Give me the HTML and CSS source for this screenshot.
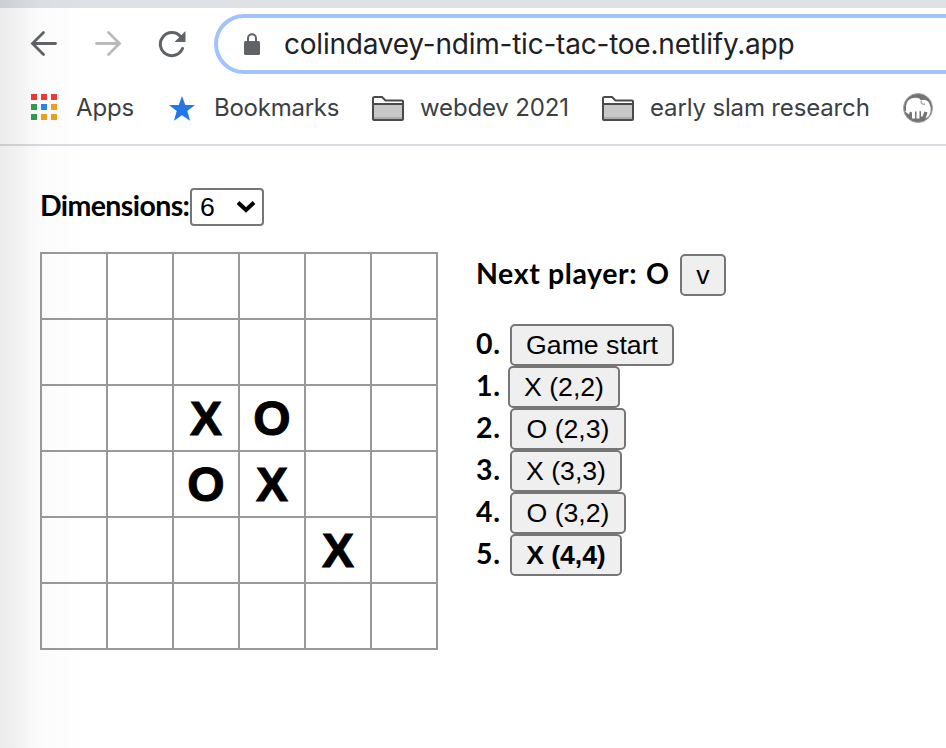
FILE: index.html
```html
<!DOCTYPE html>
<html lang="en">
<head>
<meta charset="utf-8">
<title>N-dim tic-tac-toe</title>
<link rel="stylesheet" href="styles.css">
</head>
<body>
<div class="tabstrip"></div>
<header class="browser">
  <div class="toolbar">
    <svg class="nav" width="28" height="28" viewBox="0 0 28 28"><path d="M25.500 13.500H3M13.500 2.500L2.500 13.500 13.500 24.500" fill="none" stroke="#5f6368" stroke-width="2.800" stroke-linecap="round"/></svg>
    <svg class="nav forward" width="28" height="28" viewBox="0 0 28 28"><path d="M2.500 13.500h22M14.500 2.500L25.500 13.500 14.500 24.500" fill="none" stroke="#bababa" stroke-width="2.800" stroke-linecap="round"/></svg>
    <svg class="nav reload" width="28" height="28" viewBox="0 0 28 28"><path d="M24.500 18.500A11.500 11.500 0 1 1 22.500 6.500" fill="none" stroke="#5f6368" stroke-width="3" stroke-linecap="round"/><path d="M27.500 1v11H16.500z" fill="#5f6368"/></svg>
    <div class="omnibox">
      <svg width="16" height="22" viewBox="0 0 16 22"><path d="M4 9V5.200a4 4 0 0 1 8 0V9" fill="none" stroke="#5f6368" stroke-width="2"/><rect y="8" width="16" height="14" rx="1.500" fill="#5f6368"/></svg>
      <span class="url">colindavey-ndim-tic-tac-toe.netlify.app</span>
    </div>
  </div>
  <nav class="bookmarks">
    <svg class="apps" width="26" height="26" viewBox="0 0 26 26"><path d="M0 0h6v6H0zM10 0h6v6h-6zM20 0h6v6h-6z" fill="#ef3b36"/><path d="M0 10h6v6H0zM0 20h6v6H0z" fill="#359a55"/><path d="M10 10h6v6h-6z" fill="#2a87f0"/><path d="M20 10h6v6h-6zM10 20h6v6h-6zM20 20h6v6h-6z" fill="#eea022"/></svg>
    <span class="label label-apps">Apps</span>
    <svg class="star" width="26" height="25" viewBox="0 0 26 25"><path d="M13 0l3.300 9H26l-7.700 6 2.800 9.800L13 19.300 4.900 24.800 7.700 15 0 9h9.700z" fill="#2477e8"/></svg>
    <span class="label label-bookmarks">Bookmarks</span>
    <svg class="folder" width="32" height="25" viewBox="0 0 32 25"><path d="M1 23V2.500Q1 1 2.500 1H10l3.500 3.500H30Q31 4.500 31 5.500V23Q31 24 30 24H2Q1 24 1 23z" fill="#fff" stroke="#4a4a4a" stroke-width="2"/><path d="M2 8.500h28V23H2z" fill="#c8c8c8"/><path d="M2 21h28v2H2z" fill="#acacac"/><path d="M1 8h30" stroke="#4a4a4a" stroke-width="2"/></svg>
    <span class="label label-webdev">webdev 2021</span>
    <svg class="folder" width="32" height="25" viewBox="0 0 32 25"><path d="M1 23V2.500Q1 1 2.500 1H10l3.500 3.500H30Q31 4.500 31 5.500V23Q31 24 30 24H2Q1 24 1 23z" fill="#fff" stroke="#4a4a4a" stroke-width="2"/><path d="M2 8.500h28V23H2z" fill="#c8c8c8"/><path d="M2 21h28v2H2z" fill="#acacac"/><path d="M1 8h30" stroke="#4a4a4a" stroke-width="2"/></svg>
    <span class="label label-slam">early slam research</span>
    <svg class="mammoth" width="32" height="32" viewBox="0 0 32 32"><circle cx="16" cy="16" r="14.500" fill="#737373" stroke="#a5a5a5" stroke-width="1"/><path d="M4 19Q3 9 9 6.500q5-1.500 8.500 0l1.500 2q5-2 8 2 2.500 5 1.500 10l-2 4-3 2 2-6-3-1-2 5h-1.500v-5l-1.500-1v8h-3v-7h-1.500v7h-3v-6l-2-1-1 3-4-3z" fill="#fff"/><path d="M19 9q0 4 4 3" fill="none" stroke="#aaa" stroke-width="1.500"/></svg>
  </nav>
</header>
<main class="page">
  <div class="dimensions">
    <label class="geo" for="dims">Dimensions:</label>
    <div class="select-wrap">
      <select id="dims"><option>6</option></select>
      <svg class="chevron" width="20" height="13" viewBox="0 0 20 13"><path d="M2 2.500l8 7.500 8-7.500" fill="none" stroke="#000" stroke-width="4"/></svg>
    </div>
  </div>
  <div class="game">
    <div class="board">
      <div class="cell"></div><div class="cell"></div><div class="cell"></div><div class="cell"></div><div class="cell"></div><div class="cell"></div>
      <div class="cell"></div><div class="cell"></div><div class="cell"></div><div class="cell"></div><div class="cell"></div><div class="cell"></div>
      <div class="cell"></div><div class="cell"></div><div class="cell">X</div><div class="cell">O</div><div class="cell"></div><div class="cell"></div>
      <div class="cell"></div><div class="cell"></div><div class="cell">O</div><div class="cell">X</div><div class="cell"></div><div class="cell"></div>
      <div class="cell"></div><div class="cell"></div><div class="cell"></div><div class="cell"></div><div class="cell">X</div><div class="cell"></div>
      <div class="cell"></div><div class="cell"></div><div class="cell"></div><div class="cell"></div><div class="cell"></div><div class="cell"></div>
    </div>
    <section class="info">
      <div class="status"><span class="geo status-text">Next player:</span><span class="geo player">O</span><button class="sort">v</button></div>
      <div class="moves">
        <div class="move"><span class="geo num">0.</span><button class="start">Game start</button></div>
        <div class="move one"><span class="geo num">1.</span><button class="x">X (2,2)</button></div>
        <div class="move"><span class="geo num">2.</span><button class="o">O (2,3)</button></div>
        <div class="move"><span class="geo num">3.</span><button class="x">X (3,3)</button></div>
        <div class="move"><span class="geo num">4.</span><button class="o">O (3,2)</button></div>
        <div class="move"><span class="geo num">5.</span><button class="x current">X (4,4)</button></div>
      </div>
    </section>
  </div>
</main>
<div class="edge-shade"></div>
</body>
</html>
```
FILE: styles.css
```css
* { box-sizing: border-box; }
body { margin: 0; width: 946px; height: 748px; overflow: hidden; background: #fff; color: #000; }
svg { display: block; flex: none; }
.tabstrip { height: 8px; background: #dee1e6; }
.browser { height: 138px; border-bottom: 2px solid #dadae0; overflow: hidden; }
.toolbar { display: flex; align-items: center; height: 60px; margin-top: 6px; padding-left: 30px; }
.forward { margin-left: 36px; }
.reload { margin-left: 36px; margin-right: 1px; }
.omnibox { display: flex; align-items: center; flex: none; width: 780px; height: 60px; margin-left: 27px; padding-left: 26px; border: 4px solid #a0c3fa; border-radius: 30px; }
.url { margin-left: 24px; font: 28px/52px Inter, sans-serif; letter-spacing: -0.22px; color: #202124; white-space: nowrap; }
.bookmarks { display: flex; align-items: center; height: 36px; margin-top: 16px; padding-left: 31px; }
.apps { margin-top: -2px; }
.label { flex: none; font: 24px/36px Inter, sans-serif; letter-spacing: -0.15px; color: #3c4043; white-space: nowrap; }
.label-apps { width: 93px; margin-left: 19px; }
.label-bookmarks { width: 158px; margin-left: 19px; letter-spacing: -0.25px; }
.label-webdev { width: 182px; margin-left: 16px; }
.label-slam { width: 252px; margin-left: 16px; }
.page { padding: 42px 0 0 40px; }
.geo { height: 38px; font-family: Lato, sans-serif; font-size: 28.5px; font-weight: 700; line-height: 34px; white-space: nowrap; }
.dimensions { display: flex; height: 38px; }
.dimensions label { width: 150px; letter-spacing: -0.6px; }
.select-wrap { position: relative; }
select { display: block; width: 74px; height: 38px; padding: 0 0 0 8px; appearance: none; border: 2px solid #767676; border-radius: 4px; background: #fff; color: #000; font: 26.667px/34px "Liberation Sans", sans-serif; }
.chevron { position: absolute; right: 8px; top: 12px; pointer-events: none; }
.game { display: flex; margin-top: 26px; }
.board { display: grid; flex: none; grid-template-columns: repeat(6, 66px); grid-auto-rows: 66px; width: 398px; height: 398px; border: solid #999; border-width: 2px 0 0 2px; }
.cell { border: solid #999; border-width: 0 2px 2px 0; font: bold 48px/66px "Liberation Sans", sans-serif; text-align: center; -webkit-text-stroke: 1px #000; }
.info { margin-left: 38px; padding-top: 2px; }
.status { display: flex; align-items: center; height: 42px; }
.status-text { width: 170px; letter-spacing: 0.6px; }
.player { width: 34px; }
.moves { margin-top: 28px; }
.move { display: flex; align-items: center; height: 42px; }
.num { width: 34px; letter-spacing: 0.8px; }
.one .num { width: 32px; }
button { height: 42px; padding: 0; border: 2px solid #767676; border-radius: 5px; background: #efefef; color: #000; font: 26.667px/38px "Liberation Sans", sans-serif; white-space: nowrap; }
.sort { width: 46px; }
.start { width: 164px; }
.x { width: 112px; }
.o { width: 116px; }
.current { font-weight: 700; letter-spacing: -0.1px; }
.edge-shade { position: absolute; left: 0; top: 0; width: 86px; height: 748px; pointer-events: none; background: linear-gradient(to right, rgba(0,0,0,.08), rgba(0,0,0,.047) 25%, rgba(0,0,0,.014) 47%, transparent); }
```
